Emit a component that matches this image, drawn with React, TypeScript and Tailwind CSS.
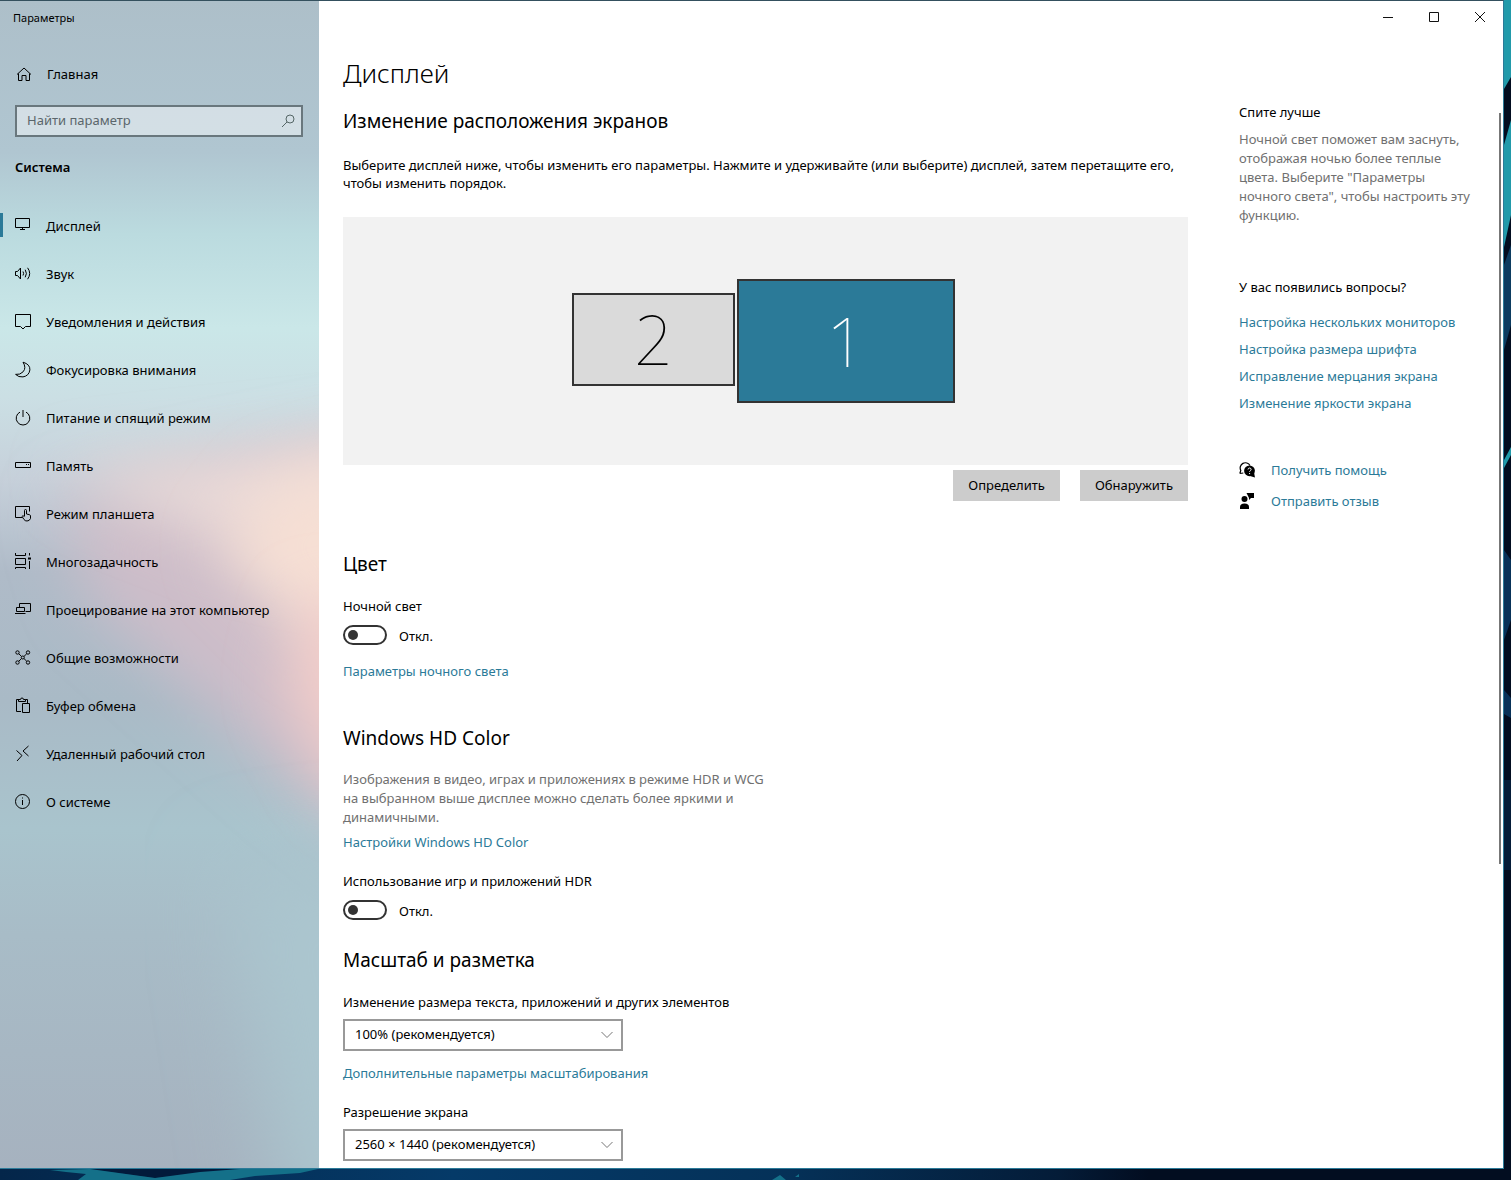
import type { ReactNode } from 'react'

interface NavItem {
  label: string
  icon: ReactNode
}

const NAV: NavItem[] = [
  {
    label: 'Дисплей',
    icon: (
      <>
        <path d="M1.5 1.5h14v9h-14z" />
        <path d="M8.5 10.5v2M6 12.5h5" />
      </>
    ),
  },
  {
    label: 'Звук',
    icon: (
      <>
        <path d="M1.5 6.5h2l3-3.5v11l-3-3.5h-2z" />
        <path d="M9 6.5q1.2 2 0 4M11.2 4.7q2.4 3.8 0 7.6M13.6 2.8q4.2 5.7 0 11.4" />
      </>
    ),
  },
  { label: 'Уведомления и действия', icon: <path d="M1.5 1.5h15v12h-5l-2.5 2.5-2.5-2.5h-5z" /> },
  { label: 'Фокусировка внимания', icon: <path d="M9 1.2q3.6 5.5.1 9.6-3 3.2-7.5 2.6 2.8 3 7.4 2.5 6-1 6.9-7 .3-5.6-6.9-7.7z" /> },
  { label: 'Питание и спящий режим', icon: <path d="M9 1v7M6 3.1a6.8 6.8 0 1 0 6 0" /> },
  {
    label: 'Память',
    icon: (
      <>
        <path d="M1.5 5.5h15v5h-15z" />
        <path d="M12 7.5h1M14 7.5h1" />
      </>
    ),
  },
  {
    label: 'Режим планшета',
    icon: (
      <>
        <path d="M8 12.5H1.5v-11h14v5" />
        <path d="M10.5 11V5.5q0-1 1-1t1 1V9l3 .7q1 .3 1 1.3v2.5q-1 2.5-3.5 2.5-2 0-3-1.5l-2-3q.5-1.5 2.5 0" />
      </>
    ),
  },
  {
    label: 'Многозадачность',
    icon: (
      <>
        <path d="M1.5 5.500h10v6h-10z" />
        <path d="M1.500 0v2.500h10V0M1.500 16v-1.500h10V16M15.500 0v2.500M15.500 8V16" />
        <path d="M14 5.500h3" strokeWidth="2" />
      </>
    ),
  },
  {
    label: 'Проецирование на этот компьютер',
    icon: (
      <>
        <path d="M5.5 6V2.5h11v8h-5" />
        <path d="M2.5 6.5h8v4h-8zM1 12.5h10.5" />
      </>
    ),
  },
  {
    label: 'Общие возможности',
    icon: (
      <>
        <circle cx="3.5" cy="3.5" r="1.7" />
        <circle cx="14" cy="3.5" r="1.7" />
        <circle cx="3.5" cy="13.5" r="1.7" />
        <circle cx="14" cy="13.5" r="1.7" />
        <circle cx="8.75" cy="8.5" r="1.5" />
        <path d="M4.8 4.8l2.7 2.600M12.700 4.800L10 7.400M4.800 12.200l2.700-2.600M12.700 12.200L10 9.600" />
      </>
    ),
  },
  {
    label: 'Буфер обмена',
    icon: (
      <>
        <path d="M7 14.5H2.5v-12h3M11.5 2.5h2v4" />
        <path d="M4.5 4.5v-2h2q0-1.5 1.500-1.500t1.500 1.500h2v2z" />
        <path d="M8.5 6.5h7v9h-7z" />
      </>
    ),
  },
  { label: 'Удаленный рабочий стол', icon: <path d="M2.5 5.5l5.5 5L3 16M14.5 1L9 6l5.500 5" /> },
  {
    label: 'О системе',
    icon: (
      <>
        <circle cx="8.5" cy="8.5" r="7" />
        <path d="M8.5 7v5M8.5 4.5v1" />
      </>
    ),
  },
]

const HELP_LINKS = [
  'Настройка нескольких мониторов',
  'Настройка размера шрифта',
  'Исправление мерцания экрана',
  'Изменение яркости экрана',
]

const LINK = 'text-[#2b7a98] hover:text-gray-500'

function Icon({ children }: { children: ReactNode }) {
  return (
    <svg className="size-[18px] shrink-0" viewBox="0 0 18 18" fill="none" stroke="currentColor" aria-hidden="true">
      {children}
    </svg>
  )
}

function Toggle({ id, label }: { id: string; label: string }) {
  return (
    <div>
      <label htmlFor={id} className="block leading-5">{label}</label>
      <div className="mt-2 flex items-center gap-3">
        <input
          id={id}
          type="checkbox"
          role="switch"
          className="h-5 w-11 appearance-none rounded-full border-2 border-[#333] before:mt-[3px] before:ml-[3px] before:block before:size-[10px] before:rounded-full before:bg-[#333] checked:bg-[#2b7a98]"
        />
        <span className="pt-0.5 leading-5">Откл.</span>
      </div>
    </div>
  )
}

function Select({ id, label, options }: { id: string; label: string; options: string[] }) {
  return (
    <div>
      <label htmlFor={id} className="block leading-5">{label}</label>
      <div className="mt-[7px] grid w-[280px] items-center">
        <select id={id} className="col-start-1 row-start-1 h-8 appearance-none border-2 border-[#999] bg-white pr-8 pl-[10px]">
          {options.map(o => <option key={o}>{o}</option>)}
        </select>
        <svg className="pointer-events-none col-start-1 row-start-1 mr-[10px] h-2 w-3 justify-self-end" viewBox="0 0 12 8" fill="none" stroke="#777" aria-hidden="true">
          <path d="M.5 1L6 6.5 11.5 1" />
        </svg>
      </div>
    </div>
  )
}

// Blurred desktop colours that shine through the sidebar
function Acrylic() {
  return (
    <svg className="absolute inset-0 size-full" viewBox="0 0 319 1167" preserveAspectRatio="none" aria-hidden="true">
      <defs>
        <linearGradient id="base" x2="0" y2="1">
          <stop offset="0" stopColor="#adbfc9" />
          <stop offset=".13" stopColor="#b0c6d1" />
          <stop offset=".2" stopColor="#bbdbdf" />
          <stop offset=".28" stopColor="#cae7e8" />
          <stop offset=".34" stopColor="#cbdfe4" />
          <stop offset=".41" stopColor="#c6d0da" />
          <stop offset=".49" stopColor="#afbbc8" />
          <stop offset=".6" stopColor="#a9bac6" />
          <stop offset=".71" stopColor="#a9c4cd" />
          <stop offset=".8" stopColor="#a8bcc7" />
          <stop offset="1" stopColor="#a6b2bf" />
        </linearGradient>
        <filter id="soft" x="-50%" y="-50%" width="200%" height="200%">
          <feGaussianBlur stdDeviation="30" />
        </filter>
        <filter id="softer" x="-50%" y="-50%" width="200%" height="200%">
          <feGaussianBlur stdDeviation="42" />
        </filter>
      </defs>
      <rect width="319" height="1167" fill="url(#base)" />
      <path d="M60 500L400 430V870L290 780 190 690 90 600z" fill="#cdbdc9" filter="url(#soft)" />
      <path d="M60 470L400 435V580L250 550 120 500z" fill="#eadad8" filter="url(#soft)" />
      <path d="M275 480L430 440V700L310 640 220 550z" fill="#f6dfd4" filter="url(#soft)" />
      <path d="M310 600L430 600V830L340 790 285 690z" fill="#f3cdc9" filter="url(#soft)" />
      <path d="M230 870L400 850V1250H290z" fill="#abc6cf" filter="url(#softer)" />
    </svg>
  )
}

function Wallpaper() {
  return (
    <>
      <svg className="absolute inset-x-0 bottom-0 h-[11px] w-full" viewBox="0 0 1511 11" preserveAspectRatio="none" aria-hidden="true">
        <defs>
          <linearGradient id="floor">
            <stop offset="0" stopColor="#04264a" />
            <stop offset=".3" stopColor="#053a68" />
            <stop offset=".52" stopColor="#053158" />
            <stop offset=".7" stopColor="#041c38" />
            <stop offset=".76" stopColor="#020d20" />
          </linearGradient>
        </defs>
        <path d="M0 0h1511v11H0z" fill="url(#floor)" />
        <path d="M88 0h150L155 9z" fill="#021a3b" />
        <path d="M50 1l40-1 65 9 45-6 40-3h78l-18 4-45 3-25 4H78l8-6-20-2z" fill="#147089" />
        <path d="M772 11l8-5 6 5zM795 8l4-3v3z" fill="#147089" />
      </svg>
      <svg className="absolute inset-y-0 right-0 h-full w-[7px]" viewBox="0 0 7 1180" preserveAspectRatio="none" aria-hidden="true">
        <path d="M0 0h7v1180H0z" fill="#020d20" />
        <path d="M0 0h7v77L0 89z" fill="#219aaa" />
        <path d="M0 145l7-25v95l-7 32z" fill="#219aaa" />
        <path d="M0 265l7-20v80l-7 25z" fill="#0c3b60" />
        <path d="M0 460l7-13v8l-7 13z" fill="#219aaa" />
        <path d="M0 550l7 10v60l-7 20zM0 690l7 8v20l-7-4z" fill="#083158" />
        <path d="M0 780h7v90H0z" fill="#041c38" />
      </svg>
    </>
  )
}

function Sidebar() {
  return (
    <aside className="relative w-[319px] shrink-0">
      <Acrylic />
      <div className="relative">
        <div className="px-[13px] pt-2 text-[11px] leading-[18px]">Параметры</div>
        <a href="#home" className="mt-[38px] flex h-5 items-center gap-[14px] px-[15px]">
          <Icon>
            <path d="M2 8.5L9 2l7 6.5M3.5 7.5v7H7v-5h4v5h3.5v-7" />
          </Icon>
          Главная
        </a>
        <div className="mt-5 mr-4 ml-[15px] flex h-8 items-center border-2 border-[#69777d] bg-white/45 px-[10px]">
          <input type="search" aria-label="Найти параметр" placeholder="Найти параметр" className="min-w-0 flex-1 bg-transparent outline-none placeholder:text-[#5b666b]" />
          <svg className="-mr-1 size-[14px]" viewBox="0 0 14 14" fill="none" stroke="#566" aria-hidden="true">
            <circle cx="9" cy="5" r="4" />
            <path d="M6 8L1 13" />
          </svg>
        </div>
        <h2 className="mt-5 px-[15px] text-[13px] leading-5 font-semibold">Система</h2>
        <nav className="mt-6 pb-8">
          {NAV.map((item, i) => (
            <a key={item.label} href="#" aria-current={i === 0 ? 'page' : undefined} className="relative flex h-12 items-center gap-[14px] px-[14px] pt-0.5 hover:bg-black/5">
              {i === 0 && <span className="absolute top-3 left-0 h-6 w-[3px] bg-[#2b7a98]" />}
              <Icon>{item.icon}</Icon>
              <span className="pt-0.5">{item.label}</span>
            </a>
          ))}
        </nav>
      </div>
    </aside>
  )
}

function Monitors() {
  return (
    <div className="mt-[25px] flex h-[248px] items-center justify-center gap-[2px] bg-[#f2f2f2] pr-1">
      <button type="button" className="mb-1 h-[93px] w-[163px] border-2 border-[#333] bg-[#dadada] text-[68px] leading-none font-thin">2</button>
      <button type="button" className="h-[124px] w-[218px] border-2 border-[#333] bg-[#2b7a98] text-[68px] leading-none font-thin text-white">1</button>
    </div>
  )
}

export default function App() {
  return (
    <div className="relative flex min-h-screen bg-[#020d20] pr-[7px] pb-[11px] font-['Noto_Sans','Open_Sans',sans-serif] text-[13px] text-black">
      <Wallpaper />
      <div className="relative flex flex-1 border-t border-r border-b border-t-[#34505e] border-r-[#2b7a98] border-b-[#2b7a98] bg-white">
        <Sidebar />
        <main className="flex min-w-0 flex-1 flex-col">
          <header className="flex h-8 justify-end">
            <button type="button" aria-label="Свернуть" className="grid w-[46px] place-items-center">
              <svg className="size-[10px]" viewBox="0 0 10 10" stroke="#111"><path d="M0 5.5h10" /></svg>
            </button>
            <button type="button" aria-label="Развернуть" className="grid w-[46px] place-items-center">
              <svg className="size-[10px]" viewBox="0 0 10 10" fill="none" stroke="#111"><path d="M.5.5h9v9h-9z" /></svg>
            </button>
            <button type="button" aria-label="Закрыть" className="grid w-[46px] place-items-center">
              <svg className="size-[10px]" viewBox="0 0 10 10" stroke="#111"><path d="M0 0l10 10M10 0L0 10" /></svg>
            </button>
          </header>
          <div className="flex flex-1 gap-[51px] pr-6 pb-[6px] pl-6">
            <div className="min-w-0 flex-1">
              <h1 className="mt-5 text-[26px] leading-10 font-light">Дисплей</h1>
              <h2 className="mt-[14px] text-[19px] leading-7">Изменение расположения экранов</h2>
              <p className="mt-[21px] leading-[18px]">
                Выберите дисплей ниже, чтобы изменить его параметры. Нажмите и удерживайте (или выберите) дисплей, затем перетащите его, чтобы изменить порядок.
              </p>
              <Monitors />
              <div className="mt-[5px] flex justify-end gap-5">
                <button type="button" className="h-[31px] bg-[#ccc] px-[15px]">Определить</button>
                <button type="button" className="h-[31px] bg-[#ccc] px-[15px]">Обнаружить</button>
              </div>

              <h2 className="mt-[49px] mb-[18px] text-[19px] leading-7">Цвет</h2>
              <Toggle id="night" label="Ночной свет" />
              <a href="#night-light" className={`mt-[15px] block leading-5 ${LINK}`}>Параметры ночного света</a>

              <h2 className="mt-[43px] text-[19px] leading-7">Windows HD Color</h2>
              <p className="mt-[18px] max-w-[436px] leading-[19px] text-[#707070]">
                Изображения в видео, играх и приложениях в режиме HDR и WCG на выбранном выше дисплее можно сделать более яркими и динамичными.
              </p>
              <a href="#hd-color" className={`mt-[5px] mb-[19px] block leading-5 ${LINK}`}>Настройки Windows HD Color</a>
              <Toggle id="hdr" label="Использование игр и приложений HDR" />

              <h2 className="mt-[25px] mb-[18px] text-[19px] leading-7">Масштаб и разметка</h2>
              <Select id="scale" label="Изменение размера текста, приложений и других элементов" options={['100% (рекомендуется)', '125%', '150%']} />
              <a href="#scaling" className={`mt-3 mb-[19px] block leading-5 ${LINK}`}>Дополнительные параметры масштабирования</a>
              <Select id="resolution" label="Разрешение экрана" options={['2560 × 1440 (рекомендуется)', '1920 × 1080']} />
            </div>

            <aside className="mt-[69px] w-[240px] shrink-0">
              <h3 className="leading-5">Спите лучше</h3>
              <p className="mt-2 leading-[19px] text-[#707070]">
                Ночной свет поможет вам заснуть, отображая ночью более теплые цвета. Выберите "Параметры ночного света", чтобы настроить эту функцию.
              </p>
              <h3 className="mt-[52px] leading-5">У вас появились вопросы?</h3>
              <ul className="mt-[15px] space-y-[7px]">
                {HELP_LINKS.map(text => (
                  <li key={text} className="leading-5"><a href="#help" className={LINK}>{text}</a></li>
                ))}
              </ul>
              <div className="mt-[47px] space-y-[11px]">
                <a href="#support" className={`flex items-center gap-4 leading-5 ${LINK}`}>
                  <svg className="size-4 text-black" viewBox="0 0 16 16" aria-hidden="true">
                    <path d="M.8 11.5l1-3A5.2 5.2 0 1 1 11 3.5M.8 11.5l3.5-.5" fill="none" stroke="currentColor" strokeWidth="1.2" />
                    <circle cx="10.500" cy="8.8" r="5.4" fill="currentColor" />
                    <path d="M11 14l5 1.5-1-5z" fill="currentColor" />
                    <path d="M9 7.5q.1-1.500 1.600-1.500 1.500.1 1.500 1.400 0 .8-.8 1.300-.7.5-.7 1.200M10.600 11v1.100" fill="none" stroke="#fff" />
                  </svg>
                  Получить помощь
                </a>
                <a href="#feedback" className={`flex items-center gap-4 leading-5 ${LINK}`}>
                  <svg className="size-4 text-black" viewBox="0 0 16 16" fill="currentColor" aria-hidden="true">
                    <circle cx="5.5" cy="6" r="3" />
                    <path d="M1 16v-2q0-3.500 4.500-3.500T10 14v2z" />
                    <path d="M7.5 0H15v5h-3l-2 2V5L9.500 4z" />
                  </svg>
                  Отправить отзыв
                </a>
              </div>
            </aside>
          </div>
        </main>
        <div className="absolute top-28 right-[2px] h-[751px] w-[2px] bg-[#777]" />
      </div>
    </div>
  )
}
